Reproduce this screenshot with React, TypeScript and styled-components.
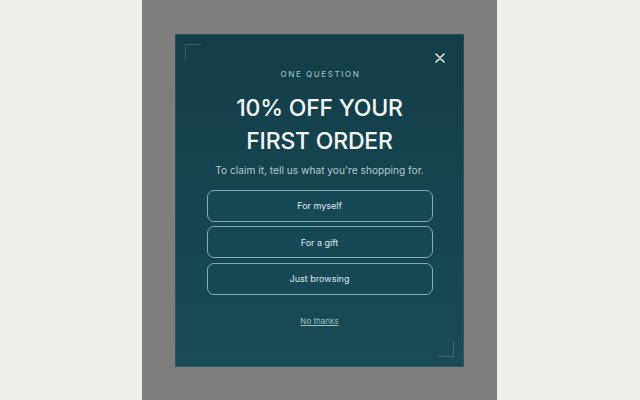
import React from "react";
import styled, { createGlobalStyle } from "styled-components";

const GlobalStyle = createGlobalStyle`
  html, body { margin: 0; padding: 0; }
  body {
    background: #efeee9;
    font-family: Inter, "Noto Sans", "Liberation Sans", sans-serif;
  }
`;

const Page = styled.div`
  width: 640px;
  height: 400px;
  box-sizing: border-box;
  padding-left: 142px;
  display: flex;
`;

const Overlay = styled.div`
  width: 355px;
  height: 400px;
  background: #7e7e7c;
  display: flex;
  align-items: center;
  justify-content: center;
`;

const Modal = styled.div`
  position: relative;
  box-sizing: border-box;
  width: 289px;
  height: 333px;
  background: linear-gradient(180deg, #123e47 0%, #164551 55%, #1a4b56 100%);
  box-shadow: 0 0 0 1px rgba(160, 200, 205, 0.12) inset;
  display: flex;
  flex-direction: column;
  align-items: center;
  padding-top: 35px;
`;

const Corner = styled.span<{ $pos: "tl" | "br" }>`
  position: absolute;
  width: 15px;
  height: 15px;
  border-color: rgba(170, 205, 210, 0.25);
  border-style: solid;
  border-width: 0;
  ${(p) =>
    p.$pos === "tl"
      ? "top: 10px; left: 10px; border-top-width: 1px; border-left-width: 1px;"
      : "bottom: 10px; right: 10px; border-bottom-width: 1px; border-right-width: 1px;"}
`;

const Close = styled.button`
  position: absolute;
  top: 17px;
  right: 17px;
  width: 14px;
  height: 14px;
  padding: 0;
  border: 0;
  background: transparent;
  display: flex;
  align-items: center;
  justify-content: center;
  cursor: pointer;
`;

const Eyebrow = styled.div`
  font-size: 8px;
  line-height: 10px;
  letter-spacing: 1.6px;
  font-weight: 500;
  color: #9dbcc0;
  margin-right: -2px;
`;

const Headline = styled.h1`
  margin: 13px 0 0;
  font-size: 23px;
  line-height: 33px;
  font-weight: 500;
  color: #f3f7f6;
  text-align: center;
  letter-spacing: -0.2px;
`;

const Subtitle = styled.p`
  margin: 4px 0 0;
  font-size: 10.2px;
  line-height: 16px;
  color: #b3cdcf;
  text-align: center;
`;

const Options = styled.div`
  margin-top: 12px;
  display: flex;
  flex-direction: column;
  gap: 4.5px;
`;

const Option = styled.button`
  box-sizing: border-box;
  width: 226px;
  height: 32px;
  border: 1px solid #7fb0b3;
  border-radius: 7px;
  background: #174856;
  color: #dfeaea;
  font-family: inherit;
  font-size: 9px;
  font-weight: 400;
  cursor: pointer;
`;

const Skip = styled.a`
  margin-top: 20px;
  font-size: 8px;
  line-height: 12px;
  color: #9cc3c6;
  text-decoration: underline;
  cursor: pointer;
`;

export default function App() {
  return (
    <>
      <GlobalStyle />
      <Page>
        <Overlay>
          <Modal>
            <Corner $pos="tl" />
            <Corner $pos="br" />
            <Close aria-label="Close">
              <svg width="10" height="10" viewBox="0 0 10 10">
                <path d="M1 1L9 9M9 1L1 9" stroke="#e8f1f1" strokeWidth="1.5" strokeLinecap="round" />
              </svg>
            </Close>
            <Eyebrow>ONE QUESTION</Eyebrow>
            <Headline>
              10% OFF YOUR
              <br />
              FIRST ORDER
            </Headline>
            <Subtitle>To claim it, tell us what you're shopping for.</Subtitle>
            <Options>
              <Option>For myself</Option>
              <Option>For a gift</Option>
              <Option>Just browsing</Option>
            </Options>
            <Skip>No thanks</Skip>
          </Modal>
        </Overlay>
      </Page>
    </>
  );
}
